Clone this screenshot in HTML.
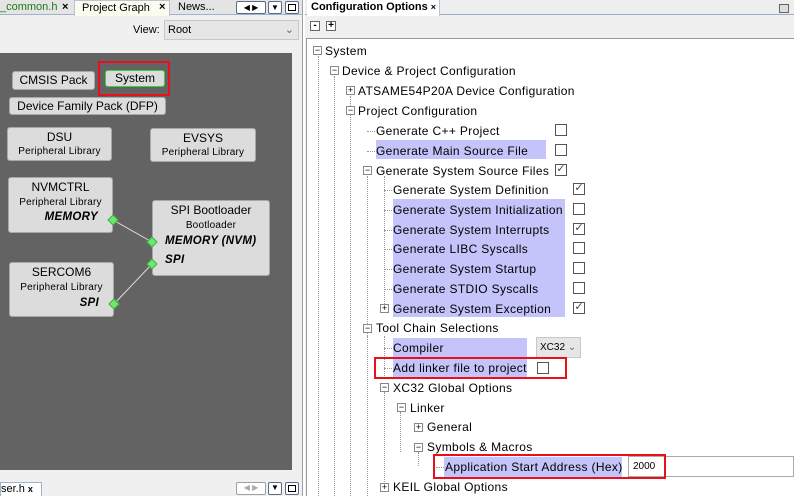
<!DOCTYPE html>
<html><head><meta charset="utf-8"><style>
*{margin:0;padding:0;box-sizing:border-box}
body{width:794px;height:496px;overflow:hidden;background:#f0f0f0;font-family:"Liberation Sans","DejaVu Sans",sans-serif;font-size:12px;color:#000;position:relative}
.a{position:absolute;white-space:nowrap}
.node{position:absolute;background:#dcdcdc;border:1px solid #a8a8a8;border-radius:3px;text-align:center;font-size:11px}
.sm{font-size:10px;letter-spacing:0.2px}
.bi{font-weight:bold;font-style:italic;font-size:11.5px;letter-spacing:0.3px}
.dm{position:absolute;width:8px;height:8px;background:#6ee86e;border:1px solid #3fae3f;transform:rotate(45deg)}
.cb{position:absolute;width:12px;height:12px;border:1px solid #555;background:#fff;font-size:11px;line-height:9px;text-align:center;color:#444}
.hl{position:absolute;background:#c4c4fb}
.ex{position:absolute;width:9px;height:9px;border:1px solid #888;background:#fff;font-size:9px;line-height:7px;text-align:center;color:#000}
.t{position:absolute;white-space:nowrap;font-size:12px;line-height:14px;letter-spacing:0.35px}
.vl{position:absolute;border-left:1px dotted #999}
.hd{position:absolute;border-top:1px dotted #999;width:8px}
.red{position:absolute;border:2px solid #e8111b}
</style></head><body>
<div class="a" style="left:0;top:0;width:302px;height:15px;background:#e4e4e4;border-bottom:1px solid #a0b4c8"></div>
<div class="a" style="left:0;top:0;height:15px;font-size:11px;color:#1a7a1a;line-height:14px">_common.h</div>
<div class="a" style="left:62px;top:1px;font-size:11px;font-weight:bold">×</div>
<div class="a" style="left:74px;top:0;width:96px;height:16px;background:#fbfbf0;border:1px solid #b8c4d0;border-bottom:none;font-size:11px;line-height:14px;padding-left:7px">Project Graph</div>
<div class="a" style="left:159px;top:1px;font-size:11px;font-weight:bold">×</div>
<div class="a" style="left:178px;top:0;font-size:11px;line-height:14px">News...</div>
<div class="a" style="left:236px;top:1px;width:30px;height:13px;border:1px solid #5a6a8a;border-radius:2px;background:#fff;font-size:8px;line-height:11px;text-align:center">◀ ▶</div>
<div class="a" style="left:268px;top:1px;width:14px;height:13px;border:1px solid #5a6a8a;border-radius:2px;background:#fff;font-size:8px;line-height:11px;text-align:center">▼</div>
<div class="a" style="left:285px;top:1px;width:14px;height:13px;border:1px solid #5a6a8a;border-radius:2px;background:#fff"><div style="margin:2px;width:8px;height:7px;border:1px solid #000"></div></div>
<div class="a" style="left:133px;top:24px;font-size:11px">View:</div>
<div class="a" style="left:164px;top:20px;width:135px;height:20px;background:#e6e6e6;border:1px solid #c8c8c8;font-size:11px;line-height:18px;padding-left:3px">Root<span style="position:absolute;right:4px;color:#666">⌄</span></div>
<div class="a" style="left:0;top:53px;width:292px;height:417px;background:#636363"></div>
<div class="a" style="left:302px;top:0;width:3px;height:496px;background:#fff;border-left:1px solid #a0a0a0"></div>
<div class="a" style="left:0;top:482px;width:42px;height:14px;background:#fff;border:1px solid #a0b4c8;border-bottom:none;font-size:11px;line-height:12px">ser.h <b style="font-size:9px">x</b></div>
<div class="a" style="left:236px;top:482px;width:30px;height:13px;border:1px solid #a0a0a0;border-radius:2px;background:#fff;font-size:8px;color:#aaa;text-align:center">◀ ▶</div>
<div class="a" style="left:268px;top:482px;width:14px;height:13px;border:1px solid #5a6a8a;border-radius:2px;background:#fff;font-size:8px;text-align:center">▼</div>
<div class="a" style="left:285px;top:482px;width:14px;height:13px;border:1px solid #5a6a8a;border-radius:2px;background:#fff"><div style="margin:2px;width:8px;height:7px;border:1px solid #000"></div></div>
<div class="node" style="left:12px;top:71px;width:83px;height:19px;font-size:12px;line-height:17px">CMSIS Pack</div>
<div class="node" style="left:105px;top:70px;width:60px;height:17px;border:1px solid #3fd03f;font-size:12px;line-height:15px">System</div>
<div class="red" style="left:98px;top:61px;width:72px;height:35px"></div>
<div class="node" style="left:9px;top:97px;width:157px;height:18px;font-size:12px;line-height:16px">Device Family Pack (DFP)</div>
<div class="node" style="left:7px;top:127px;width:105px;height:34px"><div style="font-size:12px;margin-top:2px">DSU</div><div class="sm" style="margin-top:2px">Peripheral Library</div></div>
<div class="node" style="left:150px;top:128px;width:106px;height:34px"><div style="font-size:12px;margin-top:2px">EVSYS</div><div class="sm" style="margin-top:2px">Peripheral Library</div></div>
<div class="node" style="left:8px;top:177px;width:105px;height:56px"><div style="font-size:12px;margin-top:2px">NVMCTRL</div><div class="sm" style="margin-top:3px">Peripheral Library</div><div class="bi" style="text-align:right;padding-right:14px;margin-top:3px">MEMORY</div></div>
<div class="node" style="left:152px;top:200px;width:118px;height:76px"><div style="font-size:12px;margin-top:2px">SPI Bootloader</div><div class="sm" style="margin-top:3px">Bootloader</div><div class="bi" style="text-align:left;padding-left:12px;margin-top:4px">MEMORY (NVM)</div><div class="bi" style="text-align:left;padding-left:12px;margin-top:7px">SPI</div></div>
<div class="node" style="left:9px;top:262px;width:105px;height:55px"><div style="font-size:12px;margin-top:2px">SERCOM6</div><div class="sm" style="margin-top:3px">Peripheral Library</div><div class="bi" style="text-align:right;padding-right:14px;margin-top:4px">SPI</div></div>
<svg class="a" style="left:0;top:0" width="300" height="496"><line x1="113" y1="220" x2="152" y2="242" stroke="#ddd" stroke-width="1"/><line x1="114" y1="304" x2="152" y2="264" stroke="#ddd" stroke-width="1"/></svg>
<div class="dm" style="left:109px;top:216px"></div>
<div class="dm" style="left:148px;top:238px"></div>
<div class="dm" style="left:148px;top:260px"></div>
<div class="dm" style="left:110px;top:300px"></div>
<div class="a" style="left:305px;top:0;width:489px;height:15px;background:#eeeeee;border-bottom:1px solid #9aafc6"></div>
<div class="a" style="left:307px;top:0;width:133px;height:16px;background:#fff;border-right:1px solid #b8c4d0;font-size:11px;font-weight:bold;line-height:14px;padding-left:4px">Configuration Options <span style="font-size:9px">×</span></div>
<div class="a" style="left:779px;top:4px;width:10px;height:9px;border:1px solid #666;background:#ddd"></div>
<div class="a" style="left:310px;top:21px;width:10px;height:10px;border:1px solid #666;background:#fff;font-size:10px;line-height:7px;text-align:center;font-weight:bold">-</div>
<div class="a" style="left:326px;top:21px;width:10px;height:10px;border:1px solid #666;background:#fff;font-size:10px;line-height:8px;text-align:center;font-weight:bold">+</div>
<div class="a" style="left:306px;top:38px;width:488px;height:458px;background:#fff;border-left:1px solid #999;border-top:1px solid #999"></div>
<div class="hl" style="left:376px;top:140px;width:170px;height:19px"></div>
<div class="hl" style="left:393px;top:199px;width:172px;height:118px"></div>
<div class="hl" style="left:393px;top:338px;width:134px;height:20px"></div>
<div class="hl" style="left:393px;top:358px;width:134px;height:19px"></div>
<div class="hl" style="left:444px;top:457px;width:178px;height:20px"></div>
<div class="vl" style="left:318px;top:56px;height:440px"></div>
<div class="vl" style="left:334px;top:76px;height:420px"></div>
<div class="vl" style="left:350px;top:96px;height:400px"></div>
<div class="vl" style="left:367px;top:176px;height:160px"></div>
<div class="vl" style="left:384px;top:176px;height:132px"></div>
<div class="vl" style="left:367px;top:336px;height:160px"></div>
<div class="vl" style="left:384px;top:336px;height:40px"></div>
<div class="vl" style="left:384px;top:392px;height:100px"></div>
<div class="vl" style="left:400px;top:412px;height:40px"></div>
<div class="vl" style="left:418px;top:452px;height:14px"></div>
<div class="ex" style="left:313px;top:46px">−</div><div class="t" style="left:325px;top:44px">System</div>
<div class="ex" style="left:330px;top:66px">−</div><div class="t" style="left:342px;top:64px">Device &amp; Project Configuration</div>
<div class="ex" style="left:346px;top:86px">+</div><div class="t" style="left:358px;top:84px">ATSAME54P20A Device Configuration</div>
<div class="ex" style="left:346px;top:106px">−</div><div class="t" style="left:358px;top:104px">Project Configuration</div>
<div class="hd" style="left:367px;top:131px"></div><div class="t" style="left:376px;top:124px">Generate C++ Project</div><div class="cb" style="left:555px;top:124px"></div>
<div class="hd" style="left:367px;top:151px"></div><div class="t" style="left:376px;top:144px">Generate Main Source File</div><div class="cb" style="left:555px;top:144px"></div>
<div class="ex" style="left:363px;top:166px">−</div><div class="t" style="left:376px;top:164px">Generate System Source Files</div><div class="cb" style="left:555px;top:164px">✓</div>
<div class="hd" style="left:384px;top:190px"></div><div class="t" style="left:393px;top:183px">Generate System Definition</div><div class="cb" style="left:573px;top:183px">✓</div>
<div class="hd" style="left:384px;top:210px"></div><div class="t" style="left:393px;top:203px">Generate System Initialization</div><div class="cb" style="left:573px;top:203px"></div>
<div class="hd" style="left:384px;top:230px"></div><div class="t" style="left:393px;top:223px">Generate System Interrupts</div><div class="cb" style="left:573px;top:223px">✓</div>
<div class="hd" style="left:384px;top:249px"></div><div class="t" style="left:393px;top:242px">Generate LIBC Syscalls</div><div class="cb" style="left:573px;top:242px"></div>
<div class="hd" style="left:384px;top:269px"></div><div class="t" style="left:393px;top:262px">Generate System Startup</div><div class="cb" style="left:573px;top:262px"></div>
<div class="hd" style="left:384px;top:289px"></div><div class="t" style="left:393px;top:282px">Generate STDIO Syscalls</div><div class="cb" style="left:573px;top:282px"></div>
<div class="ex" style="left:380px;top:304px">+</div><div class="t" style="left:393px;top:302px">Generate System Exception</div><div class="cb" style="left:573px;top:302px">✓</div>
<div class="ex" style="left:363px;top:324px">−</div><div class="t" style="left:376px;top:321px">Tool Chain Selections</div>
<div class="hd" style="left:384px;top:348px"></div><div class="t" style="left:393px;top:341px">Compiler</div>
<div class="a" style="left:536px;top:337px;width:45px;height:21px;background:#e6e6e6;border:1px solid #c8c8c8;font-size:10px;line-height:19px;padding-left:3px">XC32 <span style="color:#666">⌄</span></div>
<div class="hd" style="left:384px;top:368px"></div><div class="t" style="left:393px;top:361px">Add linker file to project</div><div class="cb" style="left:537px;top:362px"></div>
<div class="red" style="left:374px;top:357px;width:193px;height:22px"></div>
<div class="ex" style="left:380px;top:383px">−</div><div class="t" style="left:393px;top:381px">XC32 Global Options</div>
<div class="ex" style="left:397px;top:403px">−</div><div class="t" style="left:410px;top:401px">Linker</div>
<div class="ex" style="left:414px;top:423px">+</div><div class="t" style="left:427px;top:420px">General</div>
<div class="ex" style="left:414px;top:443px">−</div><div class="t" style="left:427px;top:440px">Symbols &amp; Macros</div>
<div class="hd" style="left:436px;top:467px"></div><div class="t" style="left:445px;top:460px">Application Start Address (Hex)</div>
<div class="a" style="left:628px;top:456px;width:166px;height:21px;background:#fff;border:1px solid #aaa;font-size:10px;line-height:19px;padding-left:4px">2000</div>
<div class="red" style="left:433px;top:454px;width:233px;height:25px"></div>
<div class="ex" style="left:380px;top:483px">+</div><div class="t" style="left:393px;top:480px">KEIL Global Options</div>
</body></html>
